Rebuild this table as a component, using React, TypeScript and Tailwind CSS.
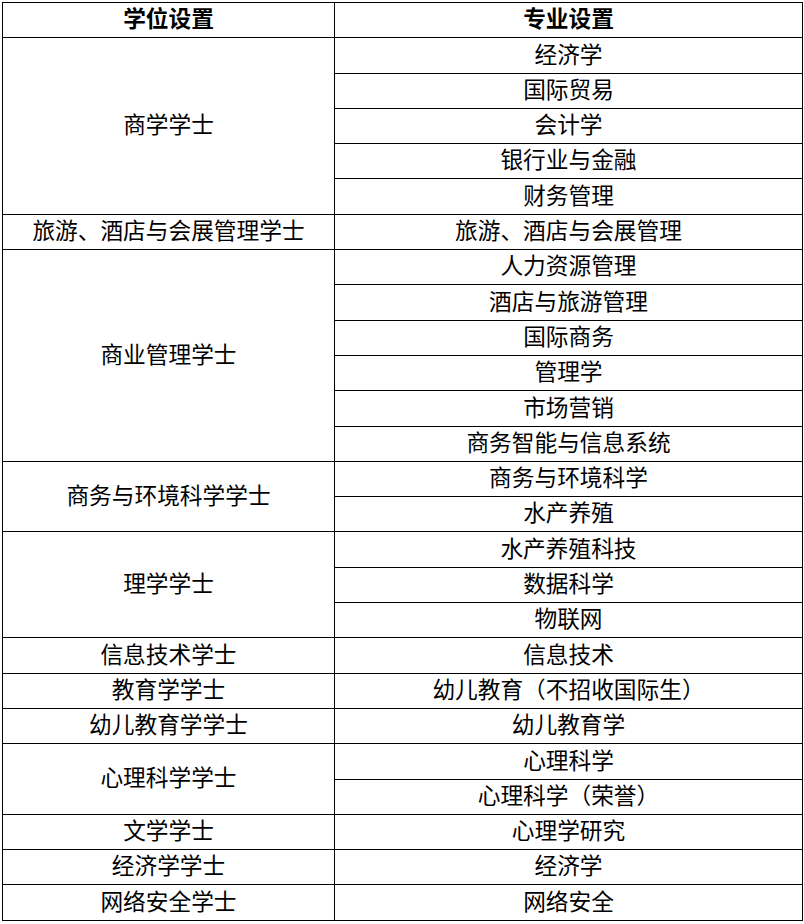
const rows: { degree: string; majors: string[] }[] = [
  { degree: "商学学士", majors: ["经济学", "国际贸易", "会计学", "银行业与金融", "财务管理"] },
  { degree: "旅游、酒店与会展管理学士", majors: ["旅游、酒店与会展管理"] },
  {
    degree: "商业管理学士",
    majors: ["人力资源管理", "酒店与旅游管理", "国际商务", "管理学", "市场营销", "商务智能与信息系统"],
  },
  { degree: "商务与环境科学学士", majors: ["商务与环境科学", "水产养殖"] },
  { degree: "理学学士", majors: ["水产养殖科技", "数据科学", "物联网"] },
  { degree: "信息技术学士", majors: ["信息技术"] },
  { degree: "教育学学士", majors: ["幼儿教育（不招收国际生）"] },
  { degree: "幼儿教育学学士", majors: ["幼儿教育学"] },
  { degree: "心理科学学士", majors: ["心理科学", "心理科学（荣誉）"] },
  { degree: "文学学士", majors: ["心理学研究"] },
  { degree: "经济学学士", majors: ["经济学"] },
  { degree: "网络安全学士", majors: ["网络安全"] },
]

const cell = "border border-black p-0 pb-[3px] text-center align-middle"

export default function App() {
  return (
    <div className="h-[924px] w-[804px] bg-white pl-[2px] pt-[2px]">
      <table
        className="w-[801px] table-fixed border-collapse text-[22.7px] leading-none text-black"
        style={{ fontFamily: '"Noto Sans CJK SC", "Noto Sans", sans-serif' }}
      >
        <colgroup>
          <col className="w-[332px]" />
          <col />
        </colgroup>
        <thead>
          <tr className="h-[35.3px]">
            <th className={`${cell} font-bold`}>学位设置</th>
            <th className={`${cell} font-bold`}>专业设置</th>
          </tr>
        </thead>
        <tbody>
          {rows.flatMap((r) =>
            r.majors.map((m, i) => (
              <tr key={r.degree + m} className="h-[35.3px]">
                {i === 0 && (
                  <td className={`${cell} font-normal`} rowSpan={r.majors.length}>
                    {r.degree}
                  </td>
                )}
                <td className={`${cell} font-normal`}>{m}</td>
              </tr>
            )),
          )}
        </tbody>
      </table>
    </div>
  )
}
